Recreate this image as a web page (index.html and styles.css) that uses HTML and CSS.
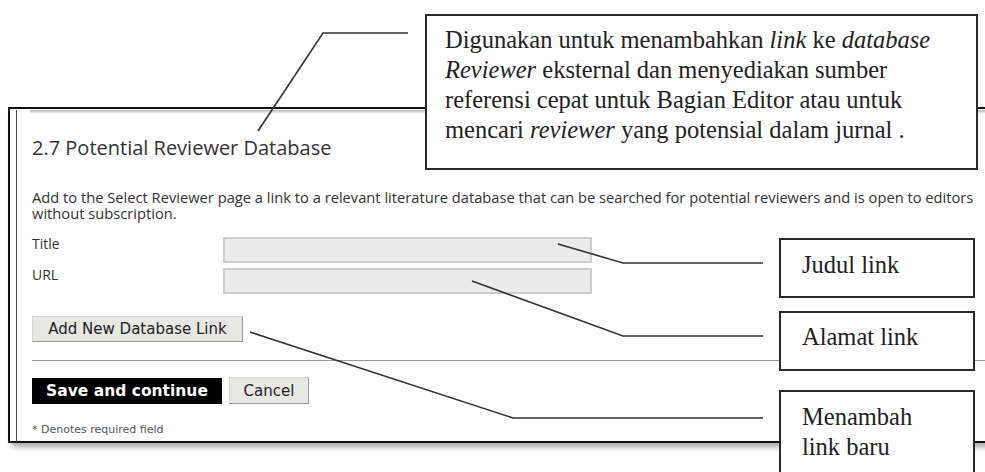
FILE: index.html
```html
<!DOCTYPE html>
<html lang="en">
<head>
    <meta charset="UTF-8">
    <meta name="viewport" content="width=device-width, initial-scale=1.0">
    <title>Potential Reviewer Database</title>
    <link rel="stylesheet" href="styles.css">
</head>
<body>
<div class="sheet">

    <!-- screenshot of the setup page -->
    <div class="frame">
        <div class="page">
            <h2>2.7 Potential Reviewer Database</h2>
            <p class="desc">Add to the Select Reviewer page a link to a relevant literature database that can be searched for potential reviewers and is open to editors without subscription.</p>

            <div class="field">
                <label for="dbTitle">Title</label>
                <input type="text" id="dbTitle">
            </div>
            <div class="field">
                <label for="dbUrl">URL</label>
                <input type="text" id="dbUrl">
            </div>

            <button type="button" class="btn btn-add">Add New Database Link</button>

            <hr>

            <div class="actions">
                <button type="submit" class="btn-save">Save and continue</button>
                <button type="button" class="btn btn-cancel">Cancel</button>
            </div>
            <p class="note">* Denotes required field</p>
        </div>
    </div>

    <!-- leader lines from the callouts -->
    <svg class="leaders" width="985" height="472" viewBox="0 0 985 472">
        <polyline points="258,131 323,33 408,33"/>
        <polyline points="558,244 623,263 763,263"/>
        <polyline points="472,281 623,336 763,336"/>
        <polyline points="250,332 513,418 763,418"/>
    </svg>

    <div class="callout callout-main">
        Digunakan untuk menambahkan <i>link</i> ke <i>database Reviewer</i> eksternal dan menyediakan sumber referensi cepat untuk Bagian Editor atau untuk mencari <i>reviewer</i> yang potensial dalam jurnal .
    </div>
    <div class="callout callout-title">Judul link</div>
    <div class="callout callout-url">Alamat link</div>
    <div class="callout callout-add">Menambah<br>link baru</div>

</div>
</body>
</html>
```

FILE: styles.css
```css
body { margin: 0; background: #fff; }

.sheet {
    position: relative;
    width: 985px;
    height: 472px;
    overflow: hidden;
}

/* page screenshot */
.frame {
    box-sizing: border-box;
    width: 1010px;
    height: 336px;
    margin: 107px 0 0 8px;
    border: 2px solid #111;
    border-right: none;
    box-shadow: 0 8px 6px -4px rgba(0, 0, 0, 0.35);
}
.page {
    box-sizing: border-box;
    height: 100%;
    margin-left: 6px;
    padding-left: 15px;
    border-left: 1px solid #444;
    font-family: "Open Sans", sans-serif;
    color: #333;
}
.page::before {
    content: "";
    display: block;
    height: 4px;
    margin: 1px 0 0 -2px;
    background: linear-gradient(#b5b5b5, #fff);
}
.page h2 {
    margin: 22px 0 0;
    font-size: 20px;
    font-weight: 400;
    line-height: 24px;
    color: #333;
}
.desc {
    width: 965px;
    margin: 29px 0 0;
    font-size: 14.7px;
    line-height: 16px;
}
.field {
    display: flex;
    align-items: flex-start;
    margin-top: 5px;
}
.desc + .field { margin-top: 16px; }
.field label {
    width: 191px;
    font-size: 14px;
    line-height: 14px;
}
.field input {
    box-sizing: border-box;
    width: 369px;
    height: 26px;
    margin: 0;
    background: #ebebeb;
    border: 2px solid #cdcdcd;
}

.btn {
    box-sizing: border-box;
    height: 26px;
    padding: 0 15px;
    font-family: "DejaVu Sans", sans-serif;
    font-size: 15px;
    color: #222;
    background: #e7e7e4;
    border: 1px solid #d6d6d6;
    border-right-color: #9a9a9a;
    border-bottom-color: #9a9a9a;
}
.btn-add {
    display: block;
    width: 211px;
    margin-top: 22px;
}
hr {
    margin: 18px 0 0;
    border: none;
    border-top: 1px solid #999;
}
.actions {
    display: flex;
    align-items: flex-start;
    gap: 7px;
    margin-top: 16px;
}
.btn-save {
    width: 190px;
    height: 26px;
    margin-top: 1px;
    padding: 0;
    font-family: "DejaVu Sans", sans-serif;
    font-size: 15.5px;
    font-weight: bold;
    color: #fff;
    background: #000;
    border: none;
}
.btn-cancel {
    width: 80px;
    height: 27px;
    padding: 0;
}
.note {
    margin: 20px 0 0;
    font-family: "DejaVu Sans", sans-serif;
    font-size: 11px;
    line-height: 12px;
    color: #555;
}

/* annotations */
.leaders {
    position: absolute;
    left: 0;
    top: 0;
}
.leaders polyline {
    fill: none;
    stroke: #333;
    stroke-width: 1.6;
}
.callout {
    position: absolute;
    box-sizing: border-box;
    background: #fff;
    border: 2px solid #2a2a2a;
    font-family: "Liberation Serif", serif;
    font-size: 24.5px;
    line-height: 30px;
    color: #222;
}
.callout-main {
    left: 425px;
    top: 14px;
    width: 553px;
    height: 156px;
    padding: 9px 10px 0 18px;
}
.callout-title {
    left: 779px;
    top: 238px;
    width: 196px;
    height: 60px;
    padding: 10px 0 0 21px;
}
.callout-url {
    left: 779px;
    top: 311px;
    width: 196px;
    height: 60px;
    padding: 9px 0 0 21px;
}
.callout-add {
    left: 779px;
    top: 390px;
    width: 196px;
    height: 110px;
    padding: 10px 0 0 21px;
}
```
